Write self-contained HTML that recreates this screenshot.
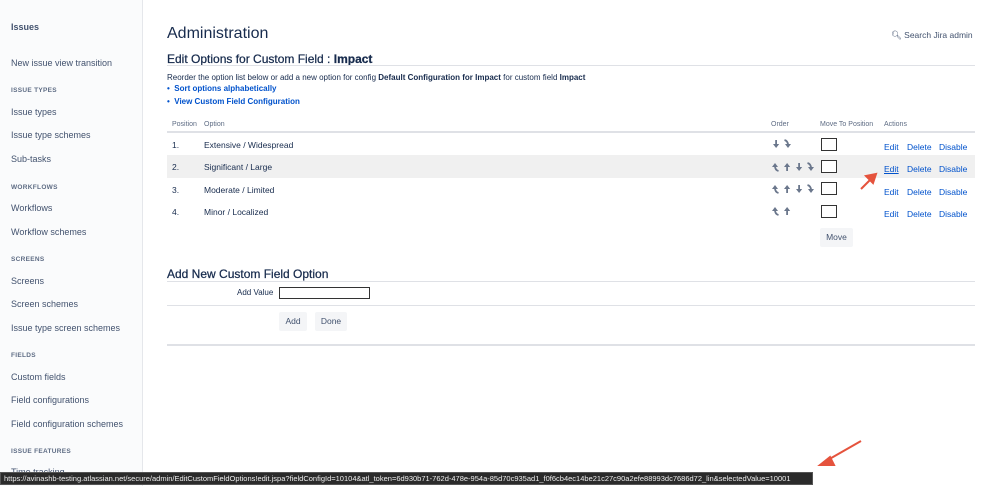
<!DOCTYPE html>
<html><head><meta charset="utf-8"><style>
*{margin:0;padding:0;box-sizing:border-box}
body{width:999px;height:486px;overflow:hidden;position:relative;font-family:"Liberation Sans",sans-serif;background:#fff;color:#172b4d}
.a{position:absolute;white-space:nowrap}
#side{position:absolute;left:0;top:0;width:143px;height:486px;background:#fafbfc;border-right:1px solid #e5e7eb}
.si{font-size:9px;color:#42526e}
.sh{font-size:6.5px;font-weight:bold;color:#5e6c84;letter-spacing:.3px}
.lk{color:#0052cc;font-size:8.5px}
.bl{font-weight:bold;color:#0052cc;font-size:8px}
.t{font-size:8.5px;color:#172b4d}
.hd{font-size:7px;color:#5e6c84}
.box{position:absolute;width:16px;height:13px;border:1px solid #333;border-bottom-width:1.5px;background:#fff}
.btn{position:absolute;background:#f4f5f7;border-radius:2px;font-size:8.5px;color:#42526e;text-align:center}
.h2{font-size:12px;-webkit-text-stroke:.25px #172b4d}
</style></head><body>
<svg width="0" height="0" style="position:absolute">
<defs>
<g id="dn"><rect x="2.2" y="0" width="1.8" height="5" fill="#6b778c"/><polygon points="0,4 6.2,4 3.1,8" fill="#6b778c"/></g>
<g id="up"><rect x="2.2" y="3" width="1.8" height="5" fill="#6b778c"/><polygon points="0,4 6.2,4 3.1,0" fill="#6b778c"/></g>
<g id="tp"><path d="M3 3 Q3 7 6.5 8" stroke="#6b778c" stroke-width="1.8" fill="none"/><polygon points="0,4 6,4 3,0" fill="#6b778c"/></g>
<g id="bt"><path d="M0.5 0 Q4 1 4 5" stroke="#6b778c" stroke-width="1.8" fill="none"/><polygon points="1,4 7,4 4,8" fill="#6b778c"/></g>
</defs></svg>
<div id="side">
<div class="a si" style="left:11px;top:22px;font-weight:bold">Issues</div>
<div class="a si" style="left:11px;top:58px">New issue view transition</div>
<div class="a sh" style="left:11px;top:87px">ISSUE TYPES</div>
<div class="a si" style="left:11px;top:107px">Issue types</div>
<div class="a si" style="left:11px;top:130px">Issue type schemes</div>
<div class="a si" style="left:11px;top:154px">Sub-tasks</div>
<div class="a sh" style="left:11px;top:184px">WORKFLOWS</div>
<div class="a si" style="left:11px;top:203px">Workflows</div>
<div class="a si" style="left:11px;top:227px">Workflow schemes</div>
<div class="a sh" style="left:11px;top:256px">SCREENS</div>
<div class="a si" style="left:11px;top:276px">Screens</div>
<div class="a si" style="left:11px;top:299px">Screen schemes</div>
<div class="a si" style="left:11px;top:323px">Issue type screen schemes</div>
<div class="a sh" style="left:11px;top:352px">FIELDS</div>
<div class="a si" style="left:11px;top:372px">Custom fields</div>
<div class="a si" style="left:11px;top:395px">Field configurations</div>
<div class="a si" style="left:11px;top:419px">Field configuration schemes</div>
<div class="a sh" style="left:11px;top:448px">ISSUE FEATURES</div>
<div class="a si" style="left:11px;top:467px">Time tracking</div>
</div>

<div class="a" style="left:167px;top:25px;font-size:16px;color:#172b4d">Administration</div>
<div class="a" style="left:891px;top:30px;font-size:8.5px;color:#42526e">&#x1F50D;&#xFE0E; Search Jira admin</div>
<div class="a h2" style="left:167px;top:52px">Edit Options for Custom Field : <b>Impact</b></div>
<div class="a" style="left:167px;top:65px;width:808px;border-top:1px solid #dfe1e6"></div>
<div class="a" style="left:167px;top:73px;font-size:8px">Reorder the option list below or add a new option for config <b>Default Configuration for Impact</b> for custom field <b>Impact</b></div>
<div class="a bl" style="left:167px;top:84px">•&nbsp; Sort options alphabetically</div>
<div class="a bl" style="left:167px;top:97px">•&nbsp; View Custom Field Configuration</div>

<div class="a hd" style="left:172px;top:121px">Position</div>
<div class="a hd" style="left:204px;top:121px">Option</div>
<div class="a hd" style="left:771px;top:121px">Order</div>
<div class="a hd" style="left:820px;top:121px">Move To Position</div>
<div class="a hd" style="left:884px;top:121px">Actions</div>
<div class="a" style="left:167px;top:131px;width:808px;border-top:2px solid #dfe1e6"></div>
<div class="a" style="left:167px;top:155px;width:808px;height:23px;background:#f0f0f0"></div>

<div class="a t" style="left:172px;top:140px">1.</div><div class="a t" style="left:204px;top:140px">Extensive / Widespread</div>
<div class="a t" style="left:172px;top:162px">2.</div><div class="a t" style="left:204px;top:162px">Significant / Large</div>
<div class="a t" style="left:172px;top:185px">3.</div><div class="a t" style="left:204px;top:185px">Moderate / Limited</div>
<div class="a t" style="left:172px;top:207px">4.</div><div class="a t" style="left:204px;top:207px">Minor / Localized</div>

<svg class="a" style="left:0;top:0" width="999" height="486">
<use href="#dn" x="773" y="140"/><use href="#bt" x="784" y="140"/>
<use href="#tp" x="772" y="163"/><use href="#up" x="784" y="163"/><use href="#dn" x="796" y="163"/><use href="#bt" x="807" y="163"/>
<use href="#tp" x="772" y="185"/><use href="#up" x="784" y="185"/><use href="#dn" x="796" y="185"/><use href="#bt" x="807" y="185"/>
<use href="#tp" x="772" y="207"/><use href="#up" x="784" y="207"/>
</svg>

<div class="box" style="left:821px;top:138px"></div>
<div class="box" style="left:821px;top:160px"></div>
<div class="box" style="left:821px;top:182px"></div>
<div class="box" style="left:821px;top:205px"></div>

<div class="a lk" style="left:884px;top:142px">Edit</div><div class="a lk" style="left:907px;top:142px">Delete</div><div class="a lk" style="left:939px;top:142px">Disable</div>
<div class="a lk" style="left:884px;top:164px;text-decoration:underline">Edit</div><div class="a lk" style="left:907px;top:164px">Delete</div><div class="a lk" style="left:939px;top:164px">Disable</div>
<div class="a lk" style="left:884px;top:187px">Edit</div><div class="a lk" style="left:907px;top:187px">Delete</div><div class="a lk" style="left:939px;top:187px">Disable</div>
<div class="a lk" style="left:884px;top:209px">Edit</div><div class="a lk" style="left:907px;top:209px">Delete</div><div class="a lk" style="left:939px;top:209px">Disable</div>

<div class="btn" style="left:820px;top:228px;width:33px;height:19px;line-height:19px">Move</div>

<div class="a h2" style="left:167px;top:267px">Add New Custom Field Option</div>
<div class="a" style="left:167px;top:281px;width:808px;border-top:1px solid #dfe1e6"></div>
<div class="a t" style="left:237px;top:288px;font-size:8px">Add Value</div>
<div class="a" style="left:279px;top:287px;width:91px;height:12px;border:1px solid #333;border-bottom-width:1.5px"></div>
<div class="a" style="left:167px;top:305px;width:808px;border-top:1px solid #dfe1e6"></div>
<div class="btn" style="left:279px;top:312px;width:28px;height:19px;line-height:19px">Add</div>
<div class="btn" style="left:315px;top:312px;width:32px;height:19px;line-height:19px">Done</div>
<div class="a" style="left:167px;top:344px;width:808px;border-top:2px solid #dfe1e6"></div>

<svg class="a" style="left:0;top:0" width="999" height="486">
<g stroke="#e5533d" stroke-width="2" fill="#e5533d">
<line x1="861" y1="189" x2="872" y2="178"/><polygon points="876,174 866,176 873,183"/>
<line x1="861" y1="441" x2="826" y2="461"/><polygon points="820,465 830,457 834,465"/>
</g></svg>

<div class="a" style="left:0;top:472px;width:813px;height:13px;background:#2b2b2b;border:1px solid #555;color:#eee;font-size:7.5px;line-height:12px;padding-left:3px;overflow:hidden">https://avinashb-testing.atlassian.net/secure/admin/EditCustomFieldOptions!edit.jspa?fieldConfigId=10104&amp;atl_token=6d930b71-762d-478e-954a-85d70c935ad1_f0f6cb4ec14be21c27c90a2efe88993dc7686d72_lin&amp;selectedValue=10001</div>
</body></html>
